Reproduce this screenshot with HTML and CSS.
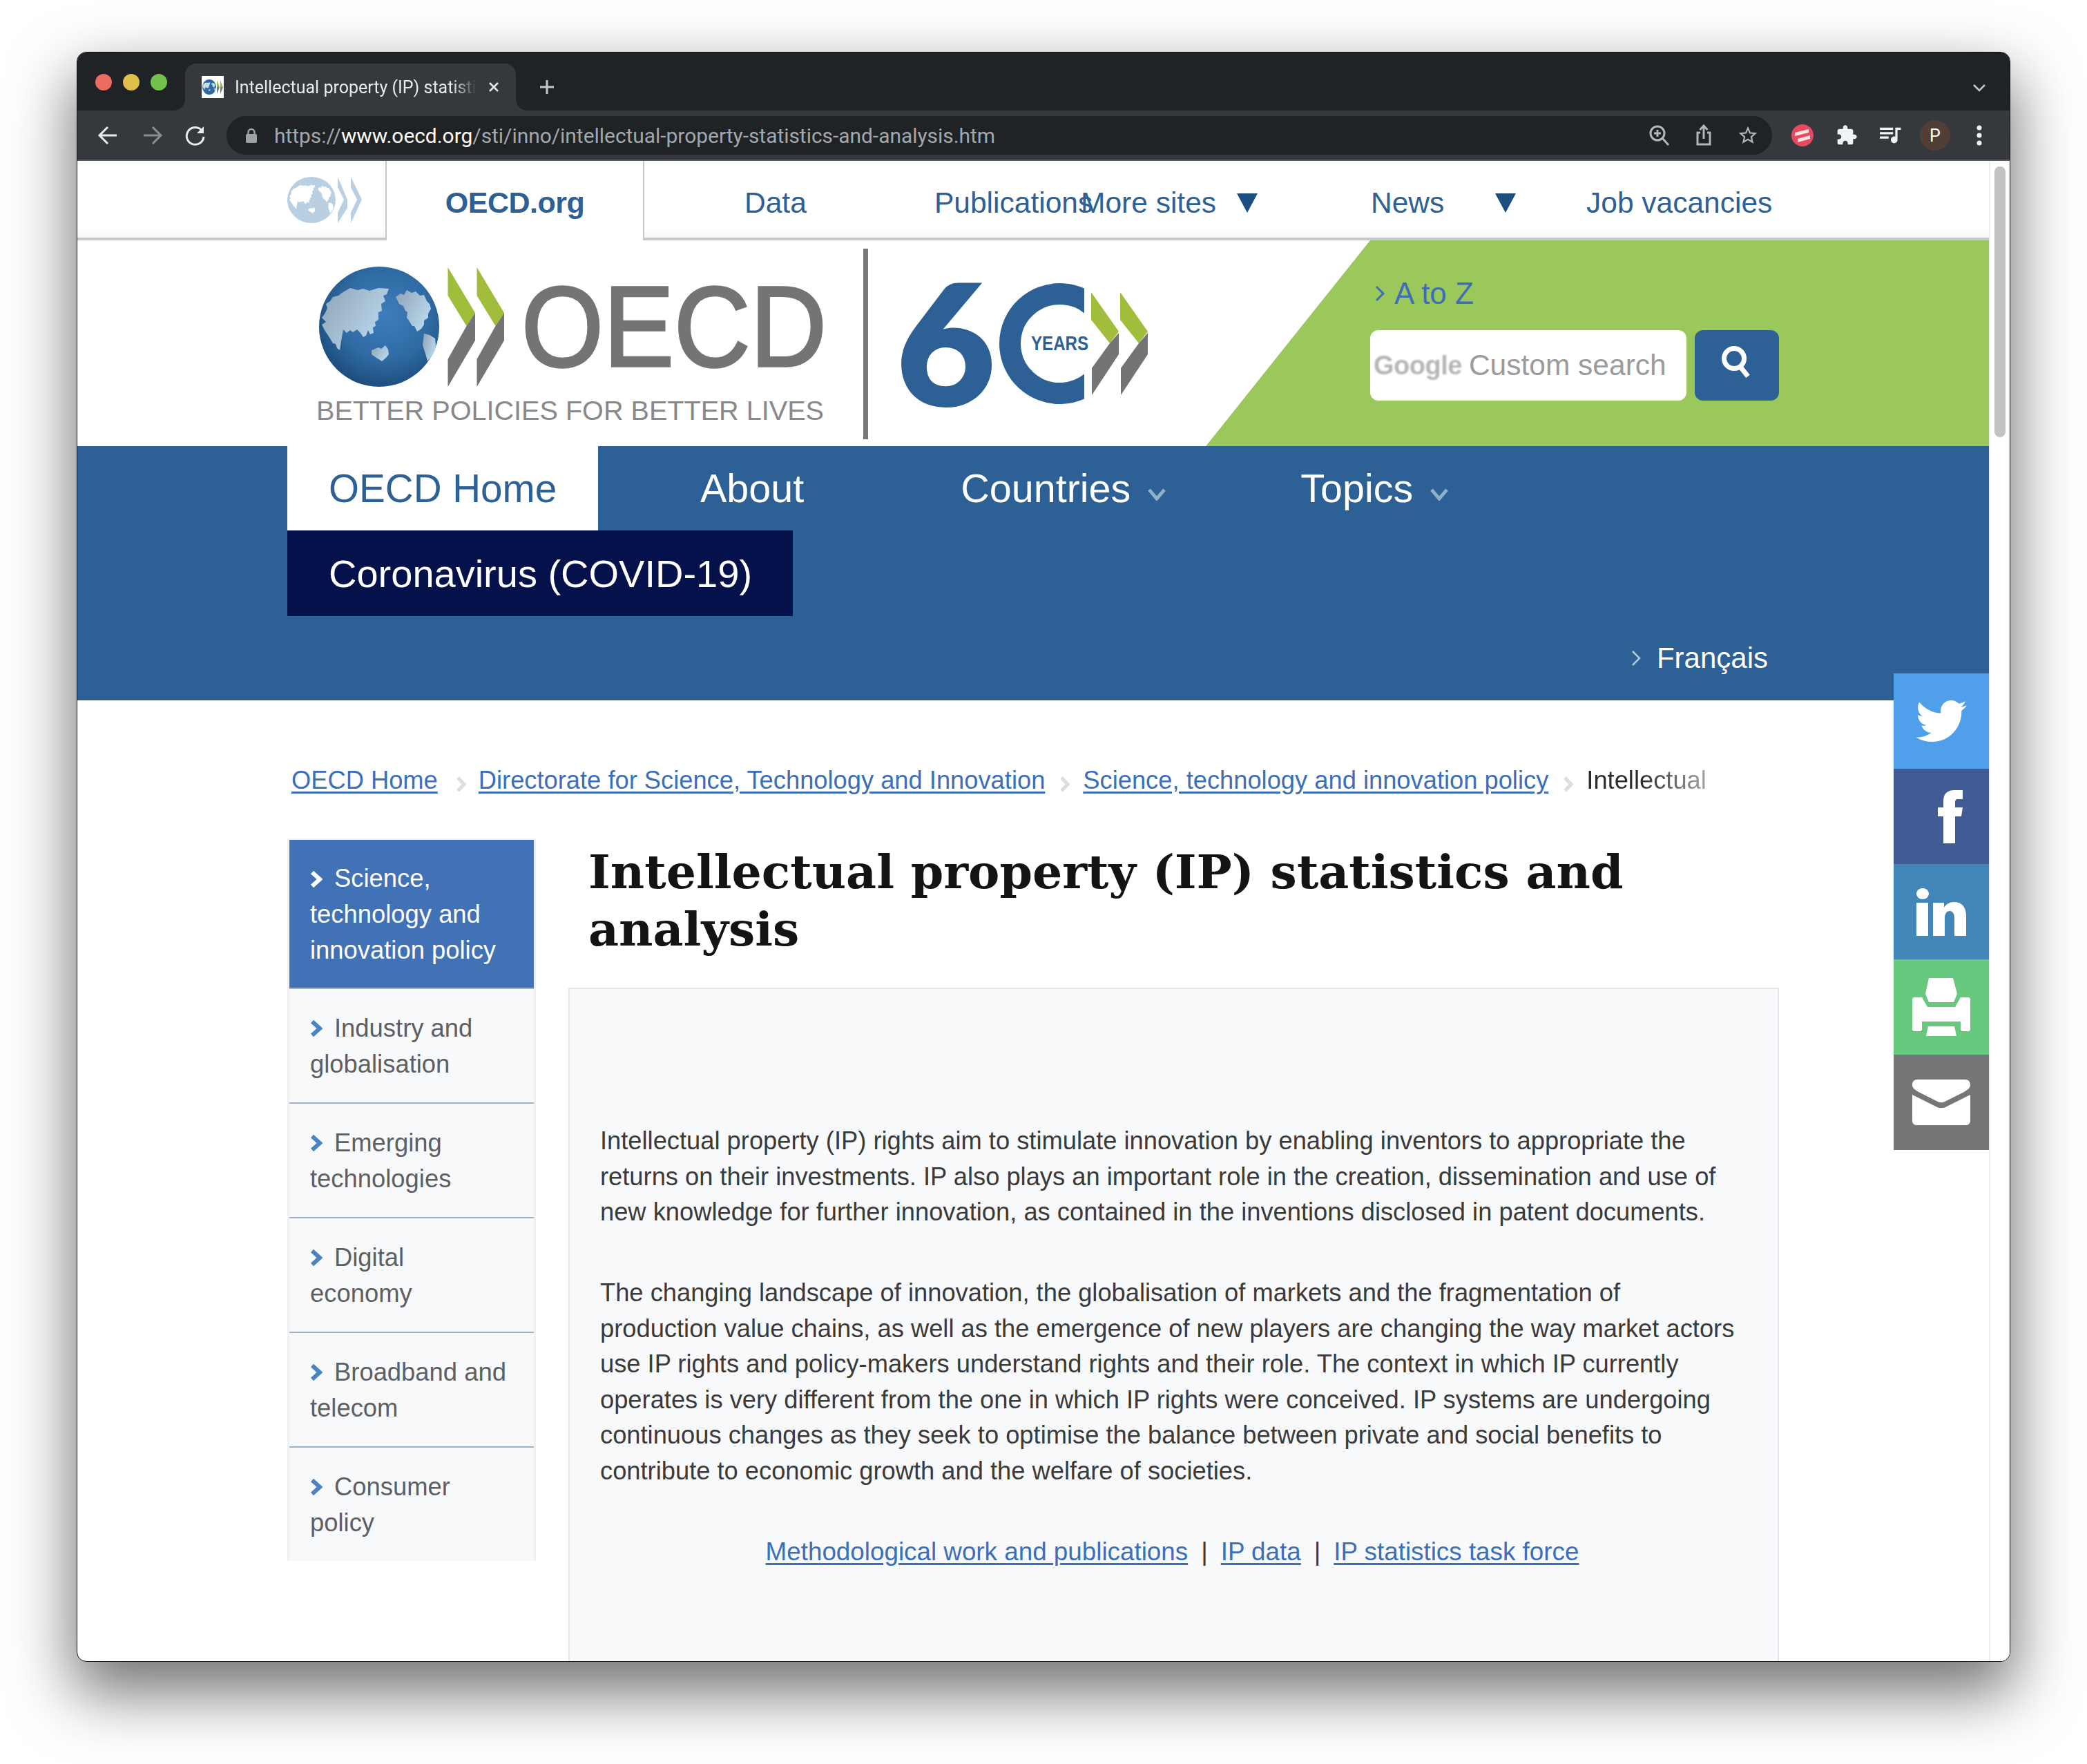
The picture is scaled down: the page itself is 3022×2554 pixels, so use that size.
FILE: index.html
```html
<!DOCTYPE html>
<html lang="en">
<head>
<meta charset="utf-8">
<title>Intellectual property (IP) statistics and analysis</title>
<link rel="stylesheet" href="styles.css">
</head>
<body>
<svg class="defs" width="0" height="0" aria-hidden="true">
  <defs>
    <radialGradient id="sea" cx="0.55" cy="0.4" r="0.62">
      <stop offset="0" stop-color="#3f7cbb"/><stop offset="0.6" stop-color="#2f6ba3"/><stop offset="1" stop-color="#1c4c7c"/>
    </radialGradient>
    <linearGradient id="land" x1="0" y1="0" x2="1" y2="0.6">
      <stop offset="0" stop-color="#8ea4b6"/><stop offset="0.6" stop-color="#a9c2d6"/><stop offset="1" stop-color="#b7d8ee"/>
    </linearGradient>
    <symbol id="land-shape" viewBox="462 386 174 174">
      <path d="M471 453L474 446 472 440 478 436 482 430 490 428 495 424 502 420 507 417 518 420 526 418 535 421 548 417 563 418 560 426 555 428 558 436 552 440 553 450 548 452 548 463 543 466 544 472 540 474 541 482 536 484 533 478 530 486 526 488 522 482 517 477 511 481 507 478 502 482 497 477 495 488 494 494 492 507 488 504 486 498 482 497 478 490 474 484 470 478 466 470 472 466 466 460Z"/>
      <path d="M573 430L580 425 585 427 589 420 596 424 602 422 608 428 614 427 618 436 622 440 624 447 620 454 620 460 614 464 614 470 610 476 604 480 600 472 597 472 592 464 589 460 590 452 587 450 584 443 578 440Z"/>
      <path d="M614 483L622 485 630 490 631 500 630 507 625 516 619 523 616 512 612 500Z"/>
      <path d="M538 507L548 503 552 505 558 500 562 506 563 513 558 519 553 523 545 518 538 513Z"/>
    </symbol>
    <clipPath id="zero-cut"><rect x="1440" y="400" width="130" height="200"/></clipPath>
  </defs>
</svg>

<div class="window">
  <div class="tabstrip">
    <div class="lights"><i class="light l-red"></i><i class="light l-yellow"></i><i class="light l-green"></i></div>
    <div class="tab">
      <svg class="favicon" viewBox="0 0 32 32">
        <rect width="32" height="32" fill="#fff"/>
        <ellipse cx="11" cy="16" rx="10" ry="11" fill="#2f6ba3"/>
        <use href="#land-shape" x="1" y="5" width="20" height="22" class="fav-land"/>
        <path d="M22 6L26 16 22 16Z M27 6L31 16 27 16Z" fill="#9fbe3c"/>
        <path d="M22 26L26 16 22 16Z M27 26L31 16 27 16Z" fill="#77787a"/>
      </svg>
      <span class="tab-title">Intellectual property (IP) statistics and analysis</span>
      <svg class="tab-close" viewBox="0 0 16 16"><path d="M2 2L14 14M14 2L2 14"/></svg>
    </div>
    <svg class="new-tab" viewBox="0 0 24 24"><path d="M12 2V22M2 12H22"/></svg>
    <svg class="tab-menu" viewBox="0 0 20 12"><path d="M2 2L10 10 18 2"/></svg>
  </div>

  <div class="toolbar">
    <div class="nav-btns">
      <svg class="ticon" viewBox="0 0 32 32"><path class="st-light" d="M28 16H5M15 4L3 16 15 28"/></svg>
      <svg class="ticon" viewBox="0 0 32 32"><path class="st-dim" d="M4 16H27M17 4L29 16 17 28"/></svg>
      <svg class="ticon" viewBox="0 0 32 32"><path class="st-light" d="M26 10A12.400 12.400 0 1 0 28 18"/><path class="fill-light" d="M28 3V13H18Z"/></svg>
    </div>
    <div class="omnibox">
      <svg class="lock" viewBox="0 0 18 22"><path d="M4.500 9V6.500A4.500 4.500 0 0 1 13.500 6.500V9" class="lock-bow"/><rect x="1" y="9" width="16" height="13" rx="2" class="lock-body"/></svg>
      <span class="url">https://<b>www.oecd.org</b>/sti/inno/intellectual-property-statistics-and-analysis.htm</span>
      <div class="omni-icons">
        <svg class="ticon" viewBox="0 0 32 32"><circle class="st-grey" cx="13" cy="13" r="10"/><path class="st-grey" d="M20.500 20.500L29 30M13 8V18M8 13H18"/></svg>
        <svg class="ticon" viewBox="0 0 32 32"><path class="st-grey" d="M11 12H7V29H25V12H21M16 21V2M10.500 8L16 2 21.500 8"/></svg>
        <svg class="ticon" viewBox="0 0 24 24"><path class="fill-grey" d="M22 9.240l-7.190-.62L12 2 9.190 8.630 2 9.240l5.460 4.730L5.820 21 12 17.270 18.180 21l-1.630-7.030L22 9.240zM12 15.400l-3.760 2.270 1-4.280-3.320-2.880 4.380-.38L12 6.100l1.710 4.040 4.380.38-3.320 2.880 1 4.280L12 15.400z"/></svg>
      </div>
    </div>
    <div class="ext-icons">
      <svg class="ticon" viewBox="0 0 32 32"><circle cx="16" cy="16" r="16" fill="#e9495f"/><path d="M5 12L25 7V12L5 17ZM9 21L27 16V21L9 26Z" fill="#fbe3e6"/></svg>
      <svg class="ticon" viewBox="0 0 24 24"><path class="fill-white" d="M20.500 11H19V7c0-1.100-.9-2-2-2h-4V3.500C13 2.120 11.880 1 10.500 1S8 2.120 8 3.500V5H4c-1.100 0-1.990.9-1.990 2v3.800H3.500c1.490 0 2.700 1.210 2.700 2.700s-1.210 2.700-2.700 2.700H2V20c0 1.100.9 2 2 2h3.800v-1.500c0-1.490 1.210-2.700 2.700-2.700 1.490 0 2.700 1.210 2.700 2.700V22H17c1.100 0 2-.9 2-2v-4h1.500c1.380 0 2.500-1.120 2.500-2.500S21.880 11 20.500 11z"/></svg>
      <svg class="ticon" viewBox="3 5 20 16"><path class="fill-white" d="M15 6H3v2h12V6zm0 4H3v2h12v-2zM3 16h8v-2H3v2zM17 6v8.180c-.31-.11-.65-.18-1-.18-1.660 0-3 1.340-3 3s1.340 3 3 3 3-1.340 3-3V8h3V6h-5z"/></svg>
      <span class="avatar">P</span>
      <svg class="ticon" viewBox="0 0 32 32"><circle class="fill-white" cx="16" cy="5" r="3.500"/><circle class="fill-white" cx="16" cy="16" r="3.500"/><circle class="fill-white" cx="16" cy="27" r="3.500"/></svg>
    </div>
  </div>

  <div class="viewport">
    <div class="page">
      <div class="topbar">
        <div class="tb-logo">
          <svg class="small-logo" viewBox="0 0 108 67">
            <ellipse cx="35" cy="33.500" rx="35" ry="33.500" fill="#b9d0e3"/>
            <use href="#land-shape" x="0" y="0" width="70" height="67" class="small-land"/>
            <path d="M73 0L87 33 87 45 73 67 73 52 82 33 73 15Z M92 0L108 33 92 67 92 52 101 33 92 15Z" fill="#b9d0e3"/>
          </svg>
        </div>
        <a class="tb-home">OECD.org</a>
        <a class="tb-link tb-data">Data</a>
        <a class="tb-link tb-pub">Publications</a>
        <a class="tb-link tb-more">More sites<svg class="tri" viewBox="0 0 30 28"><path d="M0 0H30L15 28Z"/></svg></a>
        <a class="tb-link tb-news">News<svg class="tri" viewBox="0 0 30 28"><path d="M0 0H30L15 28Z"/></svg></a>
        <a class="tb-link tb-jobs">Job vacancies</a>
      </div>

      <header class="masthead">
        <svg class="logo" viewBox="440 348 1260 297" width="1260" height="297">
          <circle cx="549" cy="473" r="87" fill="url(#sea)"/>
          <use href="#land-shape" x="462" y="386" width="174" height="174" class="main-land"/>
          <path d="M648.500 387L688 453 675.500 472 648.500 428Z M690.500 387L730 453 717.500 472 690.500 428Z" fill="#a0bd3c"/>
          <path d="M688 453V493L648.500 560V520L675.500 472Z M730 453V493L690.500 560V520L717.500 472Z" fill="#737476"/>
          <text class="lg-oecd" x="755" y="530" textLength="442" lengthAdjust="spacingAndGlyphs">OECD</text>
          <text class="lg-tag" x="458" y="608" textLength="735" lengthAdjust="spacingAndGlyphs">BETTER POLICIES FOR BETTER LIVES</text>
          <rect x="1250" y="360" width="7" height="276" fill="#77787a"/>
          <text class="lg-six" x="1298" y="586" textLength="143" lengthAdjust="spacingAndGlyphs">6</text>
          <path d="M1590 451.600A72 72 0 1 0 1590 543.400" fill="none" stroke="#2d6095" stroke-width="31" clip-path="url(#zero-cut)"/>
          <text class="lg-years" x="1493" y="507" textLength="83" lengthAdjust="spacingAndGlyphs">YEARS</text>
          <path d="M1580 423L1620 480 1607 497 1580 463Z M1622 423L1662 480 1649 497 1622 463Z" fill="#a0bd3c"/>
          <path d="M1620 482V513L1581 572V533L1607 497Z M1662 482V513L1623 572V533L1649 497Z" fill="#737476"/>
        </svg>
        <div class="green-panel">
          <a class="atoz"><svg class="chev-atoz" viewBox="0 0 16 24"><path d="M3 2L13 12 3 22"/></svg>A to Z</a>
          <div class="search">
            <div class="search-box"><span class="g-mark">Google</span><span class="g-ph">Custom search</span></div>
            <button class="search-btn" type="button"><svg viewBox="0 0 44 46"><circle cx="18" cy="18" r="14.500"/><path d="M27 30L38 44"/></svg></button>
          </div>
        </div>
      </header>

      <nav class="mainnav">
        <div class="mn-row">
          <a class="mn-tab">OECD Home</a>
          <a class="mn-item mn-about">About</a>
          <a class="mn-item mn-countries">Countries<svg class="mn-chev" viewBox="0 0 26 18"><path d="M2 2L13 15 24 2"/></svg></a>
          <a class="mn-item mn-topics">Topics<svg class="mn-chev" viewBox="0 0 26 18"><path d="M2 2L13 15 24 2"/></svg></a>
        </div>
        <div class="mn-row"><a class="mn-covid">Coronavirus (COVID-19)</a></div>
        <div class="mn-lang"><svg class="chev-lang" viewBox="0 0 16 24"><path d="M3 2L13 12 3 22"/></svg><a>Français</a></div>
      </nav>

      <div class="crumbs">
        <a>OECD Home</a><svg class="crumb-sep sep-first" viewBox="0 0 15 23"><path d="M3 2L12 11.500 3 21"/></svg>
        <a>Directorate for Science, Technology and Innovation</a><svg class="crumb-sep" viewBox="0 0 15 23"><path d="M3 2L12 11.500 3 21"/></svg>
        <a>Science, technology and innovation policy</a><svg class="crumb-sep" viewBox="0 0 15 23"><path d="M3 2L12 11.500 3 21"/></svg>
        <span class="crumb-current">Intellectual</span>
      </div>

      <div class="columns">
        <aside class="side">
          <a class="side-item active"><svg class="side-chev" viewBox="0 0 18 26"><path d="M3 3L14 13 3 23"/></svg>Science, technology and innovation policy</a>
          <a class="side-item"><svg class="side-chev" viewBox="0 0 18 26"><path d="M3 3L14 13 3 23"/></svg>Industry and globalisation</a>
          <a class="side-item"><svg class="side-chev" viewBox="0 0 18 26"><path d="M3 3L14 13 3 23"/></svg>Emerging technologies</a>
          <a class="side-item"><svg class="side-chev" viewBox="0 0 18 26"><path d="M3 3L14 13 3 23"/></svg>Digital<br>economy</a>
          <a class="side-item"><svg class="side-chev" viewBox="0 0 18 26"><path d="M3 3L14 13 3 23"/></svg>Broadband and telecom</a>
          <a class="side-item last"><svg class="side-chev" viewBox="0 0 18 26"><path d="M3 3L14 13 3 23"/></svg>Consumer<br>policy</a>
        </aside>
        <main class="article">
          <h1 class="title">Intellectual property (IP) statistics and<br>analysis</h1>
          <section class="panel">
            <p>Intellectual property (IP) rights aim to stimulate innovation by enabling inventors to appropriate the<br>returns on their investments. IP also plays an important role in the creation, dissemination and use of<br>new knowledge for further innovation, as contained in the inventions disclosed in patent documents.</p>
            <p>The changing landscape of innovation, the globalisation of markets and the fragmentation of<br>production value chains, as well as the emergence of new players are changing the way market actors<br>use IP rights and policy-makers understand rights and their role. The context in which IP currently<br>operates is very different from the one in which IP rights were conceived. IP systems are undergoing<br>continuous changes as they seek to optimise the balance between private and social benefits to<br>contribute to economic growth and the welfare of societies.</p>
            <p class="panel-links"><a>Methodological work and publications</a><span class="pipe">|</span><a>IP data</a><span class="pipe">|</span><a>IP statistics task force</a></p>
          </section>
        </main>
      </div>

      <div class="share">
        <a class="sh sh-tw"><svg class="i-tw" viewBox="0 0 512 416"><path d="M459.370 103.716c.325 4.548.325 9.097.325 13.645 0 138.720-105.583 298.558-298.558 298.558-59.452 0-114.680-17.219-161.137-47.106 8.447.974 16.568 1.299 25.340 1.299 49.055 0 94.213-16.568 130.274-44.832-46.132-.975-84.792-31.188-98.112-72.772 6.498.974 12.995 1.624 19.818 1.624 9.421 0 18.843-1.300 27.614-3.573-48.081-9.747-84.143-51.980-84.143-102.985v-1.299c13.969 7.797 30.214 12.670 47.431 13.319-28.264-18.843-46.781-51.005-46.781-87.391 0-19.492 5.197-37.360 14.294-52.954 51.655 63.675 129.300 105.258 216.365 109.807-1.624-7.797-2.599-15.918-2.599-24.040 0-57.828 46.782-104.934 104.934-104.934 30.213 0 57.502 12.670 76.670 33.137 23.715-4.548 46.456-13.320 66.599-25.340-7.798 24.366-24.366 44.833-46.132 57.827 21.117-2.273 41.584-8.122 60.426-16.243-14.292 20.791-32.161 39.308-52.628 54.253z"/></svg></a>
        <a class="sh sh-fb"><svg class="i-fb" viewBox="0 0 36 77"><path d="M8 77V38H0V25H8V16C8 5 14 0 24 0H36V13H29C26 13 25 15 25 18V25H36L34 38H25V77Z"/></svg></a>
        <a class="sh sh-li"><svg class="i-li" viewBox="0 0 72 69"><ellipse cx="9" cy="8" rx="9" ry="8"/><path d="M0 21H17V69H0ZM24 21H40V28C43 23 48 20 54 20 66 20 72 27 72 41V69H55V44C55 37 53 33 48 33 44 33 41 37 41 43V69H24Z"/></svg></a>
        <a class="sh sh-pr"><svg class="i-pr" viewBox="0 0 84 84"><path d="M24 0H59L65 23 60 35H24L19 23Z"/><path d="M2 28H14L22 42H62L70 28H82L84 30V75L82 77H72L70 75V63H14V75L12 77H2L0 75V30Z"/><path d="M23 70H61L64 84H20Z"/></svg></a>
        <a class="sh sh-ma"><svg class="i-ma" viewBox="0 0 84 66"><path d="M7 0H77C82 0 84 4 84 8 84 12 80 15 75 18L49 31C44 34 40 34 35 31L9 18C4 15 0 12 0 8 0 4 2 0 7 0Z"/><path d="M0 22L34 39C39 42 45 42 50 39L84 22V59C84 63 82 66 78 66H6C2 66 0 63 0 59Z"/></svg></a>
      </div>
    </div>
    <div class="scrollbar"><div class="thumb"></div></div>
  </div>
</div>
</body>
</html>
```
FILE: styles.css
```css
* { box-sizing: border-box; }
html, body { margin: 0; padding: 0; }
body {
  width: 3022px;
  height: 2554px;
  background: #fff;
  overflow: hidden;
  padding: 75px 0 0 111px;
  font-family: "Liberation Sans", Arial, sans-serif;
}
.defs { position: absolute; }
a { text-decoration: none; color: inherit; }
svg { display: block; flex: none; }

.window {
  width: 2800px;
  height: 2331px;
  border: 1px solid #111;
  border-radius: 14px;
  overflow: hidden;
  background: #fff;
  box-shadow: 0 40px 90px 6px rgba(0, 0, 0, .55);
}

/* Browser chrome */
.tabstrip {
  height: 84px;
  background: #1f2326;
  display: flex;
  position: relative;
}
.lights { display: flex; gap: 16px; padding: 31px 0 0 26px; }
.light { width: 24px; height: 24px; border-radius: 50%; }
.l-red { background: #ec6a5e; }
.l-yellow { background: #e0c04a; }
.l-green { background: #72c14a; }
.tab {
  position: relative;
  margin: 16px 0 0 26px;
  width: 479px;
  height: 68px;
  background: #35383c;
  border-radius: 16px 16px 0 0;
  display: flex;
  align-items: center;
  padding: 0 0 0 24px;
  color: #e8eaed;
}
.tab::before, .tab::after {
  content: "";
  position: absolute;
  bottom: 0;
  width: 16px;
  height: 16px;
}
.tab::before { left: -16px; background: radial-gradient(circle at 0 0, #1f2326 15.500px, #35383c 16px); }
.tab::after { right: -16px; background: radial-gradient(circle at 100% 0, #1f2326 15.500px, #35383c 16px); }
.favicon { width: 32px; height: 32px; }
.fav-land { fill: #c8dcec; }
.tab-title {
  margin-left: 16px;
  width: 350px;
  white-space: nowrap;
  overflow: hidden;
  font-family: Roboto, sans-serif;
  font-size: 25px;
  -webkit-mask-image: linear-gradient(90deg, #000 90%, transparent);
  mask-image: linear-gradient(90deg, #000 90%, transparent);
}
.tab-close { width: 16px; height: 16px; margin-left: 17px; fill: none; stroke: #e8eaed; stroke-width: 2.500; }
.new-tab { width: 24px; height: 24px; margin: 38px 0 0 33px; fill: none; stroke: #c6c8cb; stroke-width: 3; }
.tab-menu { width: 20px; height: 12px; position: absolute; right: 34px; top: 45px; fill: none; stroke: #c6c8cb; stroke-width: 2.500; }

.toolbar {
  height: 73px;
  background: #35383c;
  border-bottom: 2px solid #5b5d61;
  padding: 8px 28px 0 29px;
  display: flex;
  align-items: flex-start;
  gap: 29px;
}
.nav-btns { display: flex; gap: 31px; padding-top: 12px; }
.ticon { width: 32px; height: 32px; }
.st-light, .st-dim, .st-grey { fill: none; stroke-width: 3; }
.st-light { stroke: #e8eaed; }
.st-dim { stroke: #8a8d90; }
.st-grey { stroke: #b4b6b9; }
.fill-light { fill: #e8eaed; }
.fill-grey { fill: #b4b6b9; }
.fill-white { fill: #f1f3f4; }
.omnibox {
  width: 2238px;
  height: 56px;
  border-radius: 28px;
  background: #1f2326;
  display: flex;
  align-items: center;
  padding: 0 19px 0 27px;
}
.lock { width: 18px; height: 22px; }
.lock-bow { fill: none; stroke: #9fa2a5; stroke-width: 2.500; }
.lock-body { fill: #9fa2a5; }
.url {
  margin-left: 24px;
  white-space: nowrap;
  font-family: Roboto, sans-serif;
  font-size: 29.900px;
  color: #a5a8ab;
}
.url b { font-weight: 400; color: #fff; }
.omni-icons { margin-left: auto; display: flex; gap: 32px; }
.ext-icons { display: flex; gap: 32px; align-items: center; height: 56px; margin-left: -1px; }
.avatar {
  width: 44px;
  height: 44px;
  margin: 0 -6px;
  border-radius: 50%;
  background: #523e35;
  color: #fff;
  font-family: Roboto, sans-serif;
  font-size: 25px;
  display: flex;
  align-items: center;
  justify-content: center;
}

/* Page */
.viewport { display: flex; height: 2172px; }
.page { position: relative; width: 2768px; flex: none; overflow: hidden; }
.scrollbar { flex: 1; background: #fff; border-left: 2px solid #eceef0; padding: 8px 6px 0 6px; }
.thumb { width: 16px; height: 392px; border-radius: 8px; background: #c1c1c1; }

.topbar {
  height: 115px;
  display: flex;
  align-items: stretch;
  background: linear-gradient(#fff 85%, #f3f4f6);
  color: #2d6095;
  font-size: 42.500px;
}
.tb-logo { width: 446px; padding: 23px 0 0 304px; border-bottom: 4px solid #c5c7ca; }
.small-logo { width: 108px; height: 67px; }
.small-land { fill: #fff; }
.tb-home {
  width: 375px;
  background: #fff;
  border: solid #c5c7ca;
  border-width: 0 2px;
  font-weight: 700;
  font-size: 43px;
  letter-spacing: -.5px;
  display: flex;
  align-items: center;
  justify-content: center;
  padding-top: 6px;
}
.tb-link {
  display: flex;
  align-items: center;
  padding-top: 11px;
  white-space: nowrap;
  border-bottom: 4px solid #c5c7ca;
}
.tb-data { width: 420px; padding-left: 145px; }
.tb-pub { width: 212px; }
.tb-more { width: 420px; }
.tb-news { width: 312px; }
.tb-jobs { flex: 1; }
.tri { width: 30px; height: 28px; fill: #1d4e80; }
.tb-more .tri { margin-left: 30px; }
.tb-news .tri { margin-left: 74px; }

.masthead { position: relative; height: 298px; }
.logo { margin-left: 328px; position: relative; z-index: 1; }
.lg-oecd { font-family: "Liberation Sans", sans-serif; font-size: 165px; fill: #737476; stroke: #737476; stroke-width: 3.500; }
.lg-tag { font-family: "Liberation Sans", sans-serif; font-size: 39px; fill: #87888a; }
.lg-six { font-family: Lato, "Liberation Sans", sans-serif; font-weight: 900; font-size: 240px; fill: #2d6095; stroke: #2d6095; stroke-width: 4; }
.lg-years { font-family: "Liberation Sans", sans-serif; font-weight: 700; font-size: 30px; fill: #2d6095; }
.main-land { fill: url(#land); }
.green-panel {
  position: absolute;
  left: 1634px;
  right: 0;
  top: 0;
  height: 298px;
  background: #9bc85a;
  clip-path: polygon(238px 0, 100% 0, 100% 100%, 0 100%);
  padding: 52px 0 0 238px;
}
.atoz {
  display: flex;
  align-items: center;
  gap: 13px;
  height: 50px;
  padding-left: 6px;
  color: #3c6fb8;
  font-size: 44px;
}
.chev-atoz { width: 16px; height: 24px; fill: none; stroke: #3c6fb8; stroke-width: 3; }
.search { display: flex; gap: 12px; margin-top: 28px; }
.search-box {
  width: 458px;
  height: 102px;
  background: #fff;
  border-radius: 12px;
  display: flex;
  align-items: center;
  padding: 0 0 0 5px;
}
.g-mark { font-weight: 700; font-size: 38px; letter-spacing: -.5px; color: #b5b6b8; filter: blur(1px); }
.g-ph { font-size: 42.500px; color: #9a9b9d; margin-left: 10px; white-space: nowrap; }
.search-btn {
  width: 122px;
  height: 102px;
  border: 0;
  padding: 0;
  border-radius: 12px;
  background: #2d6095;
  display: flex;
  align-items: center;
  justify-content: center;
}
.search-btn svg { width: 44px; height: 46px; margin-top: -10px; fill: none; stroke: #fff; stroke-width: 7; }

.mainnav { height: 368px; background: #2d6095; color: #fff; font-size: 56px; padding-left: 304px; }
.mn-row { display: flex; height: 122px; align-items: stretch; }
.mn-tab { width: 450px; padding-left: 60px; background: #fff; color: #2d6095; font-size: 56.600px; display: flex; align-items: center; white-space: nowrap; }
.mn-item { display: flex; align-items: center; white-space: nowrap; font-size: 57.500px; }
.mn-about { margin-left: 148px; }
.mn-countries { margin-left: 227px; }
.mn-topics { margin-left: 195px; }
.mn-chev { width: 26px; height: 18px; margin: 18px 0 0 25px; fill: none; stroke: #92b0cc; stroke-width: 5; }
.mn-covid { width: 732px; height: 124px; padding-left: 60px; background: #04114a; display: flex; align-items: center; white-space: nowrap; }
.mn-lang {
  display: flex;
  align-items: center;
  justify-content: flex-end;
  gap: 22px;
  height: 122px;
  padding: 4px 320px 0 0;
  font-size: 42px;
}
.chev-lang { width: 16px; height: 24px; fill: none; stroke: #b6c9dc; stroke-width: 2.500; }

.crumbs {
  display: flex;
  align-items: center;
  height: 52px;
  margin-top: 90px;
  padding-left: 310px;
  font-size: 36.300px;
  white-space: nowrap;
  color: #3c6fb8;
}
.crumbs a { text-decoration: underline; text-underline-offset: 4px; }
.crumb-sep { width: 15px; height: 23px; margin: 10px 19px 0 21px; fill: none; stroke: #dcdddf; stroke-width: 5; }
.sep-first { margin-left: 26px; margin-right: 18px; }
.crumb-current {
  color: transparent;
  background: linear-gradient(90deg, #2b2b2b 45%, #a5a5a5 100%);
  -webkit-background-clip: text;
  background-clip: text;
}

.columns { display: flex; margin-top: 58px; padding-left: 304px; gap: 47px; align-items: flex-start; }
.side {
  width: 360px;
  flex: none;
  background: #f8f9fb;
  border: solid #eef0f2;
  border-width: 2px 3px 0;
  font-size: 36.400px;
  line-height: 52px;
  color: #5d5f63;
}
.side-item {
  display: block;
  padding: 31px 20px 29px 30px;
  border-bottom: 2px solid #a0b2c6;
  position: relative;
  text-indent: 35px;
}
.side-item.active { background: #4272b6; color: #fff; padding: 30px 20px 28px 30px; }
.side-item.last { border-bottom: 0; }
.side-chev { position: absolute; left: 30px; top: 44px; width: 18px; height: 26px; fill: none; stroke: #4b83c3; stroke-width: 6; }
.active .side-chev { stroke: #fff; }

.article { width: 1753px; flex: none; }
.title {
  margin: 7px 0 43px;
  padding-left: 29px;
  font-family: "DejaVu Serif", serif;
  font-weight: 700;
  font-size: 68px;
  line-height: 83px;
  color: #111314;
  white-space: nowrap;
}
.panel {
  min-height: 1100px;
  background: #f8f9fb;
  border: solid #e4e6e9;
  border-width: 2px 2px 0;
  padding: 194px 20px 0 44px;
  font-size: 36.300px;
  line-height: 51.500px;
  color: #3a3a3a;
}
.panel p { margin: 0 0 65.500px; white-space: nowrap; }
.panel a { color: #3c6fb8; text-decoration: underline; text-underline-offset: 4px; }
.panel-links { text-align: center; font-size: 36.800px; margin-top: -1px; padding-right: 28px; }
.pipe { margin: 0 19px; }

.share { position: absolute; right: 0; top: 742px; width: 138px; }
.sh { display: flex; height: 138px; align-items: center; justify-content: center; }
.sh svg { fill: #fff; }
.sh-tw { background: #4f9fea; }
.sh-fb { background: #415b95; }
.sh-li { background: #4285b8; }
.sh-pr { background: #67c97d; }
.sh-ma { background: #757678; }
.i-tw { width: 74px; height: 60px; }
.i-fb { width: 36px; height: 77px; margin-left: 25px; }
.i-li { width: 72px; height: 69px; }
.i-pr { width: 84px; height: 84px; }
.i-ma { width: 84px; height: 66px; }
```
